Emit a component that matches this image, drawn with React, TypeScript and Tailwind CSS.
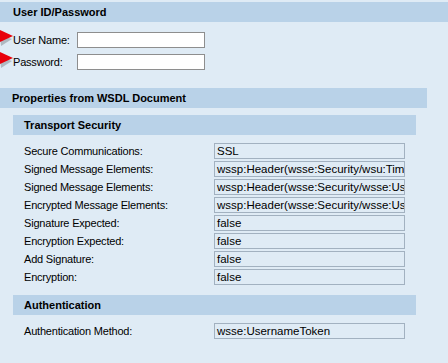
import React from 'react';

const font = { fontFamily: '"Liberation Sans", Arial, sans-serif' };

const transportRows = [
  { label: 'Secure Communications:', value: 'SSL' },
  { label: 'Signed Message Elements:', value: 'wssp:Header(wsse:Security/wsu:Timestamp)' },
  { label: 'Signed Message Elements:', value: 'wssp:Header(wsse:Security/wsse:UsernameToken)' },
  { label: 'Encrypted Message Elements:', value: 'wssp:Header(wsse:Security/wsse:UsernameToken)' },
  { label: 'Signature Expected:', value: 'false' },
  { label: 'Encryption Expected:', value: 'false' },
  { label: 'Add Signature:', value: 'false' },
  { label: 'Encryption:', value: 'false' }
];

function Arrow() {
  return (
    <svg width="16" height="18" viewBox="0 0 16 18" className="absolute left-0 top-[-3px]">
      <polygon points="0,6 12,10 1,17" fill="#8f979f" opacity="0.6" />
      <polygon points="0,1 13,7 0,13" fill="#e8000b" />
    </svg>
  );
}

function ReadOnlyRow({ label, value }: { label: string; value: string }) {
  return (
    <div className="flex items-center h-[16px] mb-[2px]">
      <div className="w-[214px] shrink-0 pl-[24px] text-[11px] tracking-[-0.2px] text-black whitespace-nowrap leading-none">
        {label}
      </div>
      <div className="w-[191px] shrink-0 h-[16px] border border-[#a2b1c0] bg-[#dfebf5] px-[2px] text-[11.5px] leading-[14px] text-black whitespace-nowrap overflow-hidden">
        {value}
      </div>
    </div>
  );
}

export default function App() {
  return (
    <div className="w-[448px] h-[363px] bg-[#dfebf5] pt-[2px] overflow-hidden relative" style={font}>
      {/* User ID/Password */}
      <div className="h-[20px] bg-[#b9d2e8] flex items-center pl-[13px] text-[11px] font-bold text-black">
        User ID/Password
      </div>
      <div className="pt-[10px] pb-[18px] flex flex-col gap-[6px]">
        <div className="flex items-center h-[16px] relative">
          <Arrow />
          <span className="w-[77px] shrink-0 pl-[13px] text-[11px] tracking-[-0.2px] text-black">User Name:</span>
          <div className="w-[128px] h-[16px] border border-[#8e8e8e] bg-white" />
        </div>
        <div className="flex items-center h-[16px] relative">
          <Arrow />
          <span className="w-[77px] shrink-0 pl-[13px] text-[11px] tracking-[-0.2px] text-black">Password:</span>
          <div className="w-[128px] h-[16px] border border-[#8e8e8e] bg-white" />
        </div>
      </div>

      {/* Properties from WSDL Document */}
      <div className="w-[427px] h-[20px] bg-[#b9d2e8] flex items-center pl-[12px] text-[11px] font-bold text-black">
        Properties from WSDL Document
      </div>

      <div className="mt-[7px] ml-[13px] w-[403px] h-[20px] bg-[#b9d2e8] flex items-center pl-[11px] text-[11px] font-bold text-black">
        Transport Security
      </div>
      <div className="pt-[8px]">
        {transportRows.map((r, i) => (
          <ReadOnlyRow key={i} label={r.label} value={r.value} />
        ))}
      </div>

      <div className="mt-[10px] ml-[13px] w-[403px] h-[20px] bg-[#b9d2e8] flex items-center pl-[11px] text-[11px] font-bold text-black">
        Authentication
      </div>
      <div className="pt-[8px]">
        <ReadOnlyRow label="Authentication Method:" value="wsse:UsernameToken" />
      </div>
    </div>
  );
}
